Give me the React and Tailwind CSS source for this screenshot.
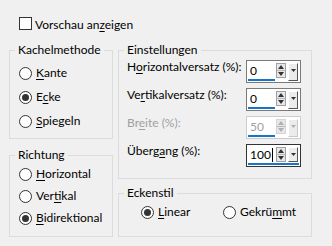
import React from "react";

function U({ children }) {
  return <span className="underline decoration-1 underline-offset-[2px]">{children}</span>;
}

function Radio({ checked, children }) {
  return (
    <div className="flex items-center gap-[4px] h-[16px]">
      <div className="w-[13px] h-[13px] rounded-full border border-[#333333] bg-white flex items-center justify-center shrink-0">
        {checked && <div className="w-[7px] h-[7px] rounded-full bg-[#333333]" />}
      </div>
      <span className="whitespace-nowrap">{children}</span>
    </div>
  );
}

function Spin({ value, disabled }) {
  const border = disabled ? "border-[#cccccc]" : "border-[#7a7a7a]";
  const arrow = disabled ? "#b0b0b0" : "#333333";
  return (
    <div className={`w-[55px] h-[23px] shrink-0 border ${border} bg-white flex`}>
      <div className="flex-1 flex flex-col justify-between pl-[1px] pb-[1px]">
        <div className={`pl-[2px] pt-[2px] leading-[16px] ${disabled ? "text-[#a0a0a0]" : "text-black"}`}>{value}</div>
        <div className="w-[27px] h-[3px] bg-[#1a74c6]" />
      </div>
      <div className="flex gap-[2px] pt-[2px] pr-[2px]">
        <div className={`w-[10px] h-[15px] border ${disabled ? "border-[#d4d4d4]" : "border-[#a0a0a0]"} bg-[#e8e8e8] flex flex-col`}>
          <div className="flex-1 flex items-center justify-center border-b border-[#b8b8b8]">
            <svg width="6" height="4" viewBox="0 0 6 4"><path d="M3 0 L6 4 L0 4 Z" fill={arrow} /></svg>
          </div>
          <div className="flex-1 flex items-center justify-center">
            <svg width="6" height="4" viewBox="0 0 6 4"><path d="M0 0 L6 0 L3 4 Z" fill={arrow} /></svg>
          </div>
        </div>
        <div className={`w-[10px] h-[18px] bg-[#ececec] border-t border-l border-t-white border-l-white border-r border-b ${disabled ? "border-r-[#c8c8c8] border-b-[#c8c8c8]" : "border-r-[#555555] border-b-[#555555]"} flex justify-center pt-[5px]`}>
          <svg width="5" height="3" viewBox="0 0 5 3"><path d="M0 0 L5 0 L2.5 3 Z" fill={arrow} /></svg>
        </div>
      </div>
    </div>
  );
}

function SpinFocused({ value }) {
  return (
    <div className="w-[55px] h-[23px] shrink-0 border border-[#333333] bg-white flex flex-col justify-between">
      <div className="flex">
        <div className="flex-1 pl-[3px] pt-[2px] leading-[16px] flex items-start text-black">
          {value}
          <span className="inline-block w-[1px] h-[14px] bg-black ml-[1px] mt-[1px]" />
        </div>
        <div className="flex gap-[2px] pt-[2px] pr-[2px]">
          <div className="w-[10px] h-[15px] border border-[#a0a0a0] bg-[#e8e8e8] flex flex-col">
            <div className="flex-1 flex items-center justify-center border-b border-[#b8b8b8]">
              <svg width="6" height="4" viewBox="0 0 6 4"><path d="M3 0 L6 4 L0 4 Z" fill="#333333" /></svg>
            </div>
            <div className="flex-1 flex items-center justify-center">
              <svg width="6" height="4" viewBox="0 0 6 4"><path d="M0 0 L6 0 L3 4 Z" fill="#333333" /></svg>
            </div>
          </div>
          <div className="w-[10px] h-[15px] bg-[#ececec] border-t border-l border-t-white border-l-white border-r border-b border-r-[#555555] border-b-[#555555] flex justify-center pt-[5px]">
            <svg width="5" height="3" viewBox="0 0 5 3"><path d="M0 0 L5 0 L2.5 3 Z" fill="#333333" /></svg>
          </div>
        </div>
      </div>
      <div className="mx-[1px] mb-[1px] h-[3px] bg-[#1a74c6]" />
    </div>
  );
}

function Group({ title, className, children }) {
  return (
    <fieldset className={`border border-[#dcdcdc] p-0 m-0 min-w-0 ${className || ""}`}>
      <legend className="ml-[5px] px-[3px] leading-[16px]">{title}</legend>
      {children}
    </fieldset>
  );
}

function Row({ label, disabled, children }) {
  return (
    <div className="flex justify-between items-start h-[23px]">
      <span className={`-mt-[1px] whitespace-nowrap ${disabled ? "text-[#a0a0a0]" : ""}`}>{label}</span>
      {children}
    </div>
  );
}

export default function App() {
  return (
    <div className="w-[332px] h-[246px] bg-[#f0f0f0] text-black text-[12px] leading-[16px] font-['Lato',sans-serif] overflow-hidden">
      <div className="pt-[17px] pl-[19px] flex items-start gap-[3px]">
        <div className="w-[13px] h-[13px] border border-[#333333] bg-white" />
        <span>Vorschau an<U>z</U>eigen</span>
      </div>
      <div className="flex pl-[9px] mt-[9px] gap-[5px]">
        <div className="w-[104px] flex flex-col">
          <Group title="Kachelmethode">
            <div className="pt-[7px] pb-[9px] pl-[9px] flex flex-col gap-[8px]">
              <Radio><U>K</U>ante</Radio>
              <Radio checked>E<U>c</U>ke</Radio>
              <Radio><U>S</U>piegeln</Radio>
            </div>
          </Group>
          <Group title="Richtung" className="mt-[8px]">
            <div className="pt-[3px] pb-[10px] pl-[9px] flex flex-col gap-[6px]">
              <Radio><U>H</U>orizontal</Radio>
              <Radio>Ver<U>t</U>ikal</Radio>
              <Radio checked><U>B</U>idirektional</Radio>
            </div>
          </Group>
        </div>
        <div className="w-[194px] flex flex-col">
          <Group title="Einstellungen">
            <div className="pt-[2px] pb-[11px] pl-[8px] pr-[10px] flex flex-col gap-[5px]">
              <Row label={<>H<U>o</U>rizontalversatz (%):</>}><Spin value="0" /></Row>
              <Row label={<>Ve<U>r</U>tikalversatz (%):</>}><Spin value="0" /></Row>
              <Row label={<>Br<U>e</U>ite (%):</>} disabled><Spin value="50" disabled /></Row>
              <Row label={<>Überg<U>a</U>ng (%):</>}><SpinFocused value="100" /></Row>
            </div>
          </Group>
          <Group title="Eckenstil" className="mt-[6px]">
            <div className="pt-[3px] pb-[16px] pl-[22px] flex">
              <div className="w-[82px]"><Radio checked><U>L</U>inear</Radio></div>
              <Radio>Gekrü<U>m</U>mt</Radio>
            </div>
          </Group>
        </div>
      </div>
    </div>
  );
}
